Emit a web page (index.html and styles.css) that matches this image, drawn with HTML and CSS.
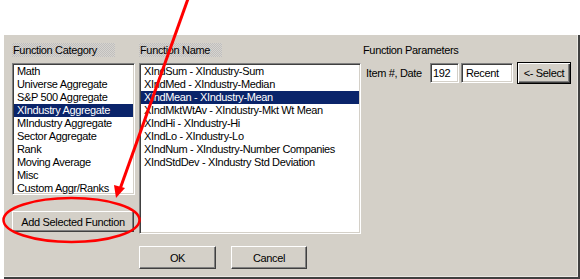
FILE: index.html
```html
<!DOCTYPE html>
<html lang="en">
<head>
    <meta charset="UTF-8">
    <title>Function Builder</title>
    <link rel="stylesheet" href="styles.css">
</head>
<body>

<div class="top-space"></div>

<div class="dialog">
    <div class="col col-category">
        <div class="caption caption-category">Function Category</div>
        <ul class="listbox category-list">
            <li>Math</li>
            <li>Universe Aggregate</li>
            <li>S&amp;P 500 Aggregate</li>
            <li class="selected">XIndustry Aggregate</li>
            <li>MIndustry Aggregate</li>
            <li>Sector Aggregate</li>
            <li>Rank</li>
            <li>Moving Average</li>
            <li>Misc</li>
            <li>Custom Aggr/Ranks</li>
        </ul>
        <button type="button" class="btn btn-add">Add Selected Function</button>
    </div>

    <div class="col col-name">
        <div class="caption caption-name">Function Name</div>
        <ul class="listbox name-list">
            <li>XIndSum - XIndustry-Sum</li>
            <li>XIndMed - XIndustry-Median</li>
            <li class="selected">XIndMean - XIndustry-Mean</li>
            <li>XIndMktWtAv - XIndustry-Mkt Wt Mean</li>
            <li>XIndHi - XIndustry-Hi</li>
            <li>XIndLo - XIndustry-Lo</li>
            <li>XIndNum - XIndustry-Number Companies</li>
            <li>XIndStdDev - XIndustry Std Deviation</li>
        </ul>
        <div class="actions">
            <button type="button" class="btn btn-ok">OK</button>
            <button type="button" class="btn btn-cancel">Cancel</button>
        </div>
    </div>

    <div class="col col-params">
        <div class="caption-plain">Function Parameters</div>
        <div class="param-row">
            <span class="param-label">Item #, Date</span>
            <input type="text" class="field field-item" value="192">
            <input type="text" class="field field-date" value="Recent">
            <button type="button" class="btn btn-default btn-select">&lt;- Select</button>
        </div>
    </div>
</div>

<!-- red markup drawn over the screenshot -->
<svg class="markup" width="580" height="279" viewBox="0 0 580 279">
    <line x1="189" y1="-4" x2="120" y2="189" stroke="#f00" stroke-width="3"/>
    <polygon points="116,198 125,188 114,185" fill="#f00"/>
    <ellipse cx="71.5" cy="220" rx="68" ry="22" fill="none" stroke="#f00" stroke-width="2.5"/>
</svg>

</body>
</html>
```

FILE: styles.css
```css
body {
    margin: 0;
    background: #fff;
    font-family: "Liberation Sans", Arial, sans-serif;
    font-size: 11px;
    letter-spacing: -0.35px;
    color: #000;
    position: relative;
    width: 580px;
    height: 279px;
    overflow: hidden;
}
.top-space {
    height: 35px;
}
.dialog {
    box-sizing: border-box;
    margin-left: 4px;
    width: 576px;
    height: 244px;
    background: #d4d0c8;
    border-right: 2px solid #404040;
    border-bottom: 2px solid #404040;
    box-shadow: inset -1px -1px #ebe9e4;
    padding: 8px 0 0 8px;
    display: flex;
}
.col {
    display: flex;
    flex-direction: column;
}
.col-category {
    width: 123px;
}
.col-name {
    width: 222px;
    margin-left: 4px;
}
.col-params {
    margin-left: 2px;
}
.caption, .caption-plain {
    height: 14px;
    line-height: 14px;
    white-space: nowrap;
}
.caption {
    padding-left: 1px;
    background: repeating-conic-gradient(#c0bebc 0 25%, #d6d4d0 0 50%) 0 0 / 2px 2px;
}
.caption-category {
    width: 102px;
}
.caption-name {
    width: 82px;
    margin-left: 0;
}
.listbox {
    list-style: none;
    margin: 6px 0 0;
    padding: 0;
    background: #fff;
    box-sizing: border-box;
    border: 1px solid;
    border-color: #808080 #fff #fff #808080;
    box-shadow: inset 1px 1px #404040, inset -1px -1px #d4d0c8;
    overflow: hidden;
}
.listbox li {
    height: 13px;
    line-height: 13px;
    padding-left: 3px;
    margin: 0 1px;
    white-space: nowrap;
}
.listbox li:first-child {
    margin-top: 1px;
}
.listbox li.selected {
    background: #0a246a;
    color: #fff;
}
.category-list {
    height: 132px;
}
.name-list {
    height: 171px;
}
.btn {
    font-family: inherit;
    font-size: 11px;
    letter-spacing: -0.35px;
    color: #000;
    background: #d4d0c8;
    box-sizing: border-box;
    border: 1px solid;
    border-color: #fff #404040 #404040 #fff;
    box-shadow: inset -1px -1px #808080;
    padding: 0;
    margin: 0;
}
.btn-add {
    margin-top: 16px;
    width: 122px;
    height: 21px;
}
.actions {
    display: flex;
    gap: 15px;
    margin-top: 12px;
}
.btn-ok {
    width: 77px;
    height: 23px;
}
.btn-cancel {
    width: 76px;
    height: 23px;
}
.param-row {
    display: flex;
    align-items: center;
    margin-top: 5px;
    height: 22px;
}
.param-label {
    width: 64px;
    padding-left: 3px;
    white-space: nowrap;
}
.field {
    font-family: inherit;
    font-size: 11px;
    letter-spacing: -0.35px;
    box-sizing: border-box;
    height: 20px;
    margin: 0;
    padding: 0 2px;
    background: #fff;
    border: 1px solid;
    border-color: #808080 #fff #fff #808080;
    box-shadow: inset 1px 1px #404040, inset -1px -1px #d4d0c8;
    outline: none;
}
.field-item {
    width: 29px;
}
.field-date {
    width: 52px;
    margin-left: 2px;
    padding-left: 4px;
}
.btn-default {
    border: 1px solid #000;
    box-shadow: inset 1px 1px #fff, inset -1px -1px #404040, inset -2px -2px #808080;
}
.btn-select {
    width: 54px;
    height: 22px;
    margin-left: 4px;
}
.markup {
    position: absolute;
    top: 0;
    left: 0;
    pointer-events: none;
}
```
